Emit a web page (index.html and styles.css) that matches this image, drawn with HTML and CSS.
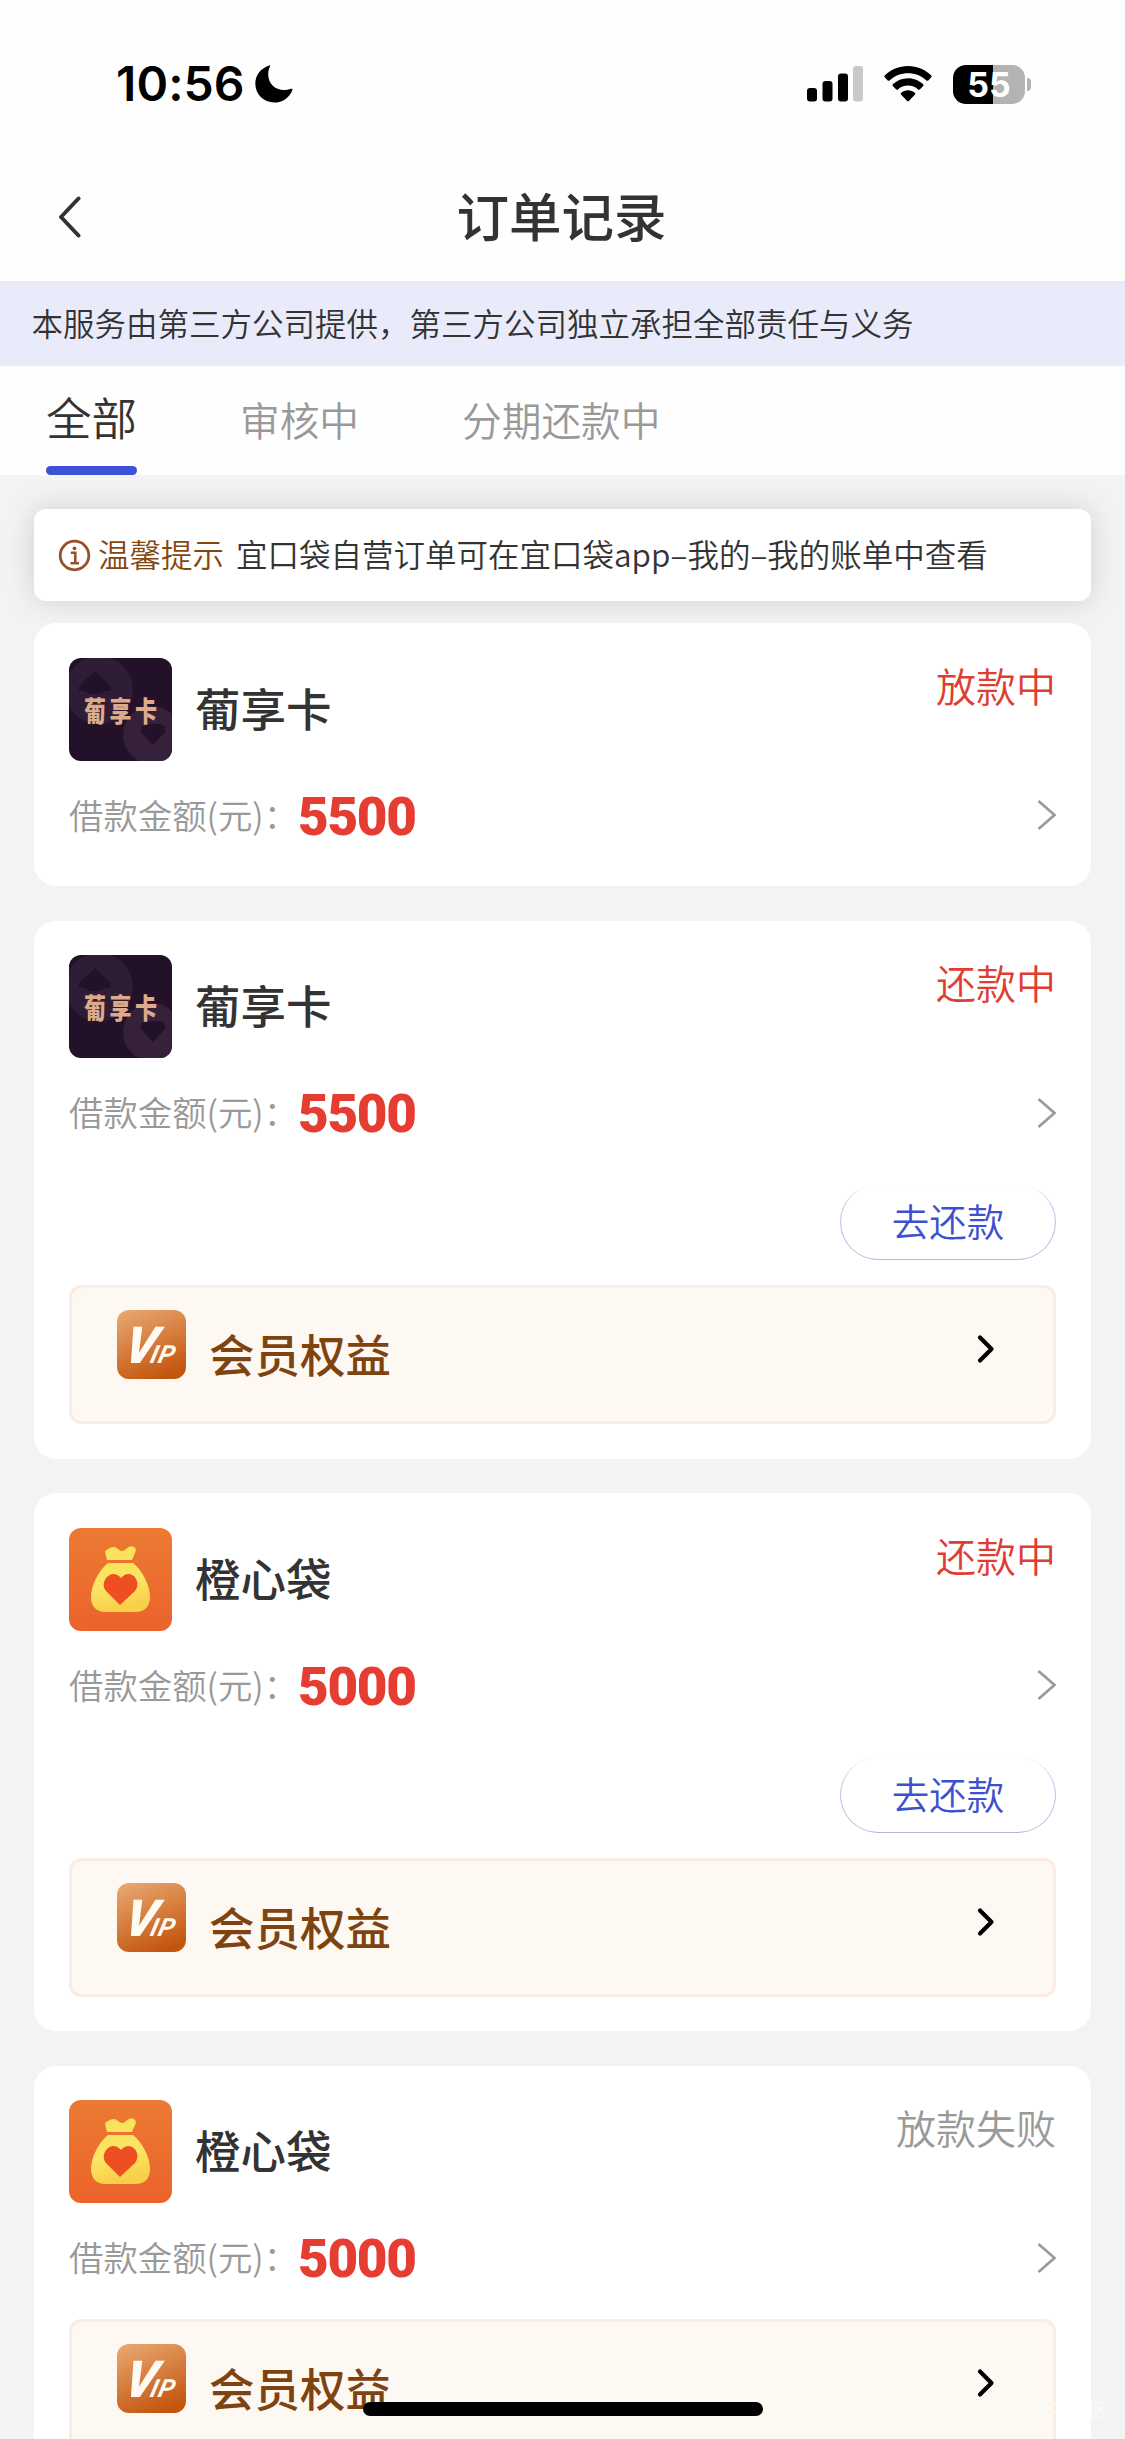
FILE: index.html
```html
<!DOCTYPE html>
<html lang="zh-CN">
<head>
<meta charset="utf-8">
<title>订单记录</title>
<link rel="stylesheet" href="styles.css">
</head>
<body>
<svg class="defs" aria-hidden="true">
  <defs>
    <linearGradient id="g-orange" x1="0" y1="0" x2="0" y2="1"><stop offset="0" stop-color="#ec7a33"/><stop offset="1" stop-color="#eb632b"/></linearGradient>
    <linearGradient id="g-bag" x1="0" y1="0" x2=".3" y2="1"><stop offset="0" stop-color="#fae25a"/><stop offset=".5" stop-color="#fbe565"/><stop offset="1" stop-color="#f8cf48"/></linearGradient>
    <linearGradient id="g-vip" x1=".2" y1="0" x2=".6" y2="1"><stop offset="0" stop-color="#e7a56d"/><stop offset="1" stop-color="#c3560f"/></linearGradient>
    <clipPath id="logo-clip"><rect width="103" height="103" rx="12"/></clipPath>
    <symbol id="logo-pu" viewBox="0 0 103 103">
      <g clip-path="url(#logo-clip)">
        <rect width="103" height="103" fill="#221128"/>
        <path fill="#2f1d36" fill-rule="evenodd" d="M30-2a34 34 0 1 1 0 68a34 34 0 1 1 0-68zM26 13L10 28v5h6l4 3h12l4-3h6v-5z"/>
        <path fill="#352139" fill-rule="evenodd" d="M83 48a29 29 0 1 1 0 58a29 29 0 1 1 0-58zM72 69v5l12 13l12-13v-5l-5-3h-14z"/>
      </g>
      <text class="logo-text" x="15" y="50" textLength="73" lengthAdjust="spacing" transform="scale(1 1.280)">葡享卡</text>
    </symbol>
    <symbol id="logo-bag" viewBox="0 0 103 103">
      <rect width="103" height="103" rx="12" fill="url(#g-orange)"/>
      <path fill="#fae25a" d="M38 32l-2-8q0-2 3-3q6-4 10 0q4 4 8 0q4-4 8-2q3 2 1 6l-3 7z"/>
      <path fill="url(#g-bag)" d="M39 35h25c9 7 17 22 17 34c0 9-5 15-15 15H37c-10 0-15-6-15-15c0-12 8-27 17-34z"/>
      <path fill="#ee4f22" d="M51 77L37 63c-5-6-1-16 7-17c4 0 6 2 8 4c2-2 4-4 8-4c8 1 11 11 6 17z"/>
    </symbol>
    <symbol id="vip" viewBox="0 0 69 69">
      <rect width="69" height="69" rx="12" fill="url(#g-vip)"/>
      <text class="vip-v" transform="translate(5 53) skewX(-13)" textLength="31" lengthAdjust="spacingAndGlyphs">V</text>
      <text class="vip-ip" transform="translate(32 53) skewX(-14)">I</text>
      <text class="vip-ip" transform="translate(40 53) skewX(-14)">P</text>
    </symbol>
    <symbol id="more" viewBox="0 0 20 32"><path d="M2.500 2L18.500 16L2.500 30" fill="none" stroke="#9b9b9b" stroke-width="2.800"/></symbol>
    <symbol id="go" viewBox="0 0 18 30"><path d="M3 3.500L14.500 15L3 26.500" fill="none" stroke="#000" stroke-width="4.200" stroke-linecap="round" stroke-linejoin="round"/></symbol>
  </defs>
</svg>

<header class="top">
  <div class="status">
    <span class="clock">10:56</span>
    <svg class="moon" width="38" height="38" viewBox="0 0 38 38"><path d="M14.200 .4C5.500 3.200 .3 10.500 .3 18.600C.3 29.200 8.600 37.500 19.200 37.500C27.400 37.500 34.600 32.600 37.400 24.900C37.700 24 37 23.400 36 23.800C33.600 24.700 31.300 25 29.100 25C19.700 25 13.200 18.600 13.200 9.300C13.200 6.500 13.800 4.100 15 1.600C15.400 .7 15 .1 14.200 .4z"/></svg>
    <svg class="signal" width="57" height="36" viewBox="0 0 57 36"><rect y="22" width="10" height="13.500" rx="3"/><rect x="15.500" y="15" width="10" height="20.500" rx="3"/><rect x="31" y="7.500" width="10" height="28" rx="3"/><rect x="46" width="10" height="35.500" rx="3" fill="#c9c9c9"/></svg>
    <svg class="wifi" width="48" height="36" viewBox="0 0 48 36"><path d="M24 0C33.200 0 41.200 3.600 47 9.200Q48.200 10.400 47 11.600L44.500 14.200Q43.400 15.200 42.200 14.200C37.300 9.700 31 7.200 24 7.200S10.700 9.700 5.800 14.200Q4.600 15.200 3.500 14.200L1 11.600Q-.2 10.400 1 9.200C6.800 3.600 14.800 0 24 0zM24 12.200C30 12.200 35.100 14.500 38.900 18Q40 19.200 39 20.300L36 23.200Q35 24.200 33.800 23.200C31.100 20.900 27.800 19.600 24 19.600S16.900 20.900 14.200 23.200Q13 24.200 12 23.200L9 20.300Q8 19.200 9.100 18C12.900 14.500 18 12.200 24 12.200zM24 24.300C26.800 24.300 29.100 25.200 30.800 26.700Q31.700 27.700 30.800 28.700L25.100 34.700Q24 35.700 22.900 34.700L17.200 28.700Q16.300 27.700 17.200 26.700C18.900 25.200 21.200 24.300 24 24.300z"/></svg>
    <div class="battery"><span class="level">55</span></div>
    <span class="nub"></span>
  </div>
  <div class="nav">
    <svg class="back" width="24" height="42" viewBox="0 0 24 42"><path d="M20.500 2.500L3 21L20.500 39.500" fill="none" stroke="#333" stroke-width="4" stroke-linecap="round" stroke-linejoin="round"/></svg>
    <h1>订单记录</h1>
  </div>
</header>
<p class="banner">本服务由第三方公司提供，第三方公司独立承担全部责任与义务</p>
<nav class="tabs">
  <a class="tab active">全部</a>
  <a class="tab">审核中</a>
  <a class="tab">分期还款中</a>
</nav>
<main class="page">
  <div class="notice">
    <svg width="33" height="33" viewBox="0 0 33 33"><circle cx="16.500" cy="16.500" r="14.300" fill="none" stroke="#96502c" stroke-width="2.800"/><circle cx="16.500" cy="9.300" r="1.900" fill="#96502c"/><path d="M12.800 13.800h4.500v10.200M12.500 24.200h8.500" fill="none" stroke="#96502c" stroke-width="2.600"/></svg>
    <b>温馨提示</b>
    <span>宜口袋自营订单可在宜口袋app–我的–我的账单中查看</span>
  </div>

  <section class="card">
    <div class="head"><svg class="logo"><use href="#logo-pu"/></svg><h2>葡享卡</h2><span class="state">放款中</span></div>
    <div class="amount"><span>借款金额(元)：</span><strong>5500</strong><svg class="more"><use href="#more"/></svg></div>
  </section>

  <section class="card">
    <div class="head"><svg class="logo"><use href="#logo-pu"/></svg><h2>葡享卡</h2><span class="state">还款中</span></div>
    <div class="amount"><span>借款金额(元)：</span><strong>5500</strong><svg class="more"><use href="#more"/></svg></div>
    <button class="repay">去还款</button>
    <div class="member"><svg class="vip"><use href="#vip"/></svg><span>会员权益</span><svg class="go"><use href="#go"/></svg></div>
  </section>

  <section class="card">
    <div class="head"><svg class="logo"><use href="#logo-bag"/></svg><h2>橙心袋</h2><span class="state">还款中</span></div>
    <div class="amount"><span>借款金额(元)：</span><strong>5000</strong><svg class="more"><use href="#more"/></svg></div>
    <button class="repay">去还款</button>
    <div class="member"><svg class="vip"><use href="#vip"/></svg><span>会员权益</span><svg class="go"><use href="#go"/></svg></div>
  </section>

  <section class="card">
    <div class="head"><svg class="logo"><use href="#logo-bag"/></svg><h2>橙心袋</h2><span class="state failed">放款失败</span></div>
    <div class="amount"><span>借款金额(元)：</span><strong>5000</strong><svg class="more"><use href="#more"/></svg></div>
    <div class="member"><svg class="vip"><use href="#vip"/></svg><span>会员权益</span><svg class="go"><use href="#go"/></svg></div>
  </section>
</main>
<div class="watermark">卡农社区</div>
<div class="home-bar"></div>
</body>
</html>
```
FILE: styles.css
```css
* { box-sizing: border-box; margin: 0; padding: 0; }
body {
  position: relative;
  width: 1125px;
  height: 2439px;
  overflow: hidden;
  background: #f3f3f3;
  color: #333;
  font-family: "Noto Sans CJK SC", sans-serif;
}
svg { display: block; flex: none; }
.defs { position: absolute; width: 0; height: 0; }

.top { height: 281px; background: #fefefe; }
.status { display: flex; align-items: center; height: 168px; padding-left: 116px; }
.clock { width: 139px; font: 600 48px/48px Inter, sans-serif; letter-spacing: 0.1px; color: #000; white-space: nowrap; }
.signal { margin-left: 514px; }
.wifi { margin-left: 20px; }
.battery {
  width: 72px;
  height: 39px;
  margin-left: 21px;
  border-radius: 13px;
  background: linear-gradient(90deg, #000 55%, #b3b3b3 55%);
}
.level { display: block; font: 700 34px/39px Inter, sans-serif; text-align: center; color: #fff; }
.nub { width: 4px; height: 13px; margin-left: 2px; border-radius: 0 4px 4px 0; background: #b3b3b3; }
.nav { display: flex; align-items: center; height: 98px; padding-left: 58px; }
.back { margin-right: -84px; }
.nav h1 { flex: 1; text-align: center; font-size: 52.500px; line-height: 92px; height: 98px; font-weight: 500; }

.banner { height: 85px; padding-left: 31.500px; background: #eaebfa; font-size: 31.500px; line-height: 83px; font-weight: 350; white-space: nowrap; }
.tabs { display: flex; height: 109px; padding-left: 46px; background: #fefefe; }
.tab { font-size: 39.700px; line-height: 105px; font-weight: 350; color: #999; margin-right: 103px; white-space: nowrap; }
.active { display: flex; flex-direction: column; width: 91px; font-size: 45.500px; line-height: 100px; color: #333; }
.active::after { content: ""; height: 9px; border-radius: 4.500px; background: #3c50d8; }

.page { padding: 34px 34px 0; }
.notice {
  display: flex;
  align-items: center;
  height: 92px;
  margin-bottom: 22px;
  padding-left: 24px;
  border-radius: 12px;
  background: #fff;
  box-shadow: 0 0 30px rgba(0, 0, 0, .15);
  font-size: 31.500px;
  line-height: 88px;
  white-space: nowrap;
}
.notice b { height: 92px; margin: 0 12px 0 7px; font-weight: 350; color: #86470f; }
.notice span { height: 92px; font-weight: 350; }

.card { margin-bottom: 34.500px; padding: 34.500px 35px; border-radius: 22px; background: #fff; }
.head { display: flex; align-items: flex-start; height: 103px; }
.logo { width: 103px; height: 103px; }
.head h2 { margin-left: 23px; font-size: 45.500px; line-height: 98px; font-weight: 500; }
.state { margin-left: auto; font-size: 40px; line-height: 55px; font-weight: 350; color: #df3d32; }
.state.failed { color: #999; }
.amount { display: flex; align-items: center; height: 91px; padding-top: 18px; }
.amount span { width: 229px; font-size: 34.400px; line-height: 68px; height: 71px; font-weight: 350; color: #999; white-space: nowrap; }
.amount strong { padding-top: 3px; font: 900 53px/60px Roboto, sans-serif; letter-spacing: -1.300px; color: #e63d32; }
.more { width: 20px; height: 32px; margin-left: auto; }
.repay {
  display: block;
  width: 216px;
  height: 76px;
  margin: 35px 0 0 auto;
  border: 1px solid transparent;
  border-radius: 38px;
  background:
    linear-gradient(#fff, #fff) padding-box,
    linear-gradient(#fbfbfe 2%, #c3c4e6 30%, #b4b6e0) border-box;
  color: #3d50cf;
  padding-bottom: 4px;
  font: 350 37.500px/68px "Noto Sans CJK SC", sans-serif;
}
.member { display: flex; height: 139px; margin-top: 25px; padding: 22px 58px 0 45px; border: 3px solid #fbebe1; border-radius: 12px; background: #fdf8f2; }
.vip { width: 69px; height: 69px; }
.member span { margin-left: 23px; font-size: 45.500px; line-height: 86px; font-weight: 500; color: #7e430f; }
.go { width: 18px; height: 30px; margin: 24px 0 0 auto; }

.logo-text { font: 900 22px "Noto Sans CJK SC", sans-serif; fill: #deaa8c; }
.vip-v { font: italic 900 51px Roboto, sans-serif; fill: #fffaf2; }
.vip-ip { font: italic 700 25px Roboto, sans-serif; fill: #fffaf2; }

.watermark { position: absolute; left: 1032px; top: 2396px; font-size: 19px; line-height: 26px; color: rgba(255, 255, 255, .65); }
.home-bar { position: absolute; left: 363px; top: 2402px; width: 400px; height: 14px; border-radius: 7px; background: #000; }
```
